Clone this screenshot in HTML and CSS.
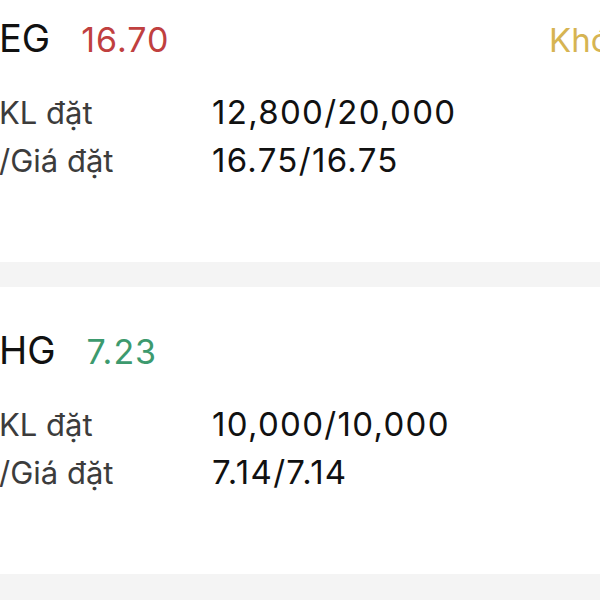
FILE: index.html
```html
<!DOCTYPE html>
<html lang="vi">
<head>
    <meta charset="UTF-8">
    <meta name="viewport" content="width=device-width, initial-scale=1.0">
    <title>Lệnh đặt</title>
    <link rel="stylesheet" href="styles.css">
</head>
<body>
    <div class="orders">
        <div class="order">
            <div class="order-head">
                <span class="ticker">EG</span>
                <span class="price down">16.70</span>
                <span class="status">Khớp</span>
            </div>
            <div class="row">
                <span class="label">KL đặt</span>
                <span class="value">12,800/20,000</span>
            </div>
            <div class="row">
                <span class="label">/Giá đặt</span>
                <span class="value">16.75/16.75</span>
            </div>
        </div>
        <div class="order">
            <div class="order-head">
                <span class="ticker">HG</span>
                <span class="price up">7.23</span>
            </div>
            <div class="row">
                <span class="label">KL đặt</span>
                <span class="value">10,000/10,000</span>
            </div>
            <div class="row">
                <span class="label">/Giá đặt</span>
                <span class="value">7.14/7.14</span>
            </div>
        </div>
    </div>
</body>
</html>
```

FILE: styles.css
```css
body {
    margin: 0;
    font-family: Inter, "Noto Sans", sans-serif;
    color: #111;
    background-color: #f4f4f4;
    overflow: hidden;
}
.orders {
    margin-top: -25px;
    margin-left: -1px;
    width: 650px;
}
.order {
    background-color: #fff;
    height: 287px;
    box-sizing: border-box;
    padding-top: 40px;
    margin-bottom: 25px;
}
.order-head {
    display: flex;
    align-items: baseline;
    gap: 31px;
    height: 50px;
    margin-bottom: 27px;
}
.ticker {
    font-size: 38px;
}
.price {
    font-size: 34px;
    letter-spacing: 1px;
}
.down {
    color: #c0403f;
}
.up {
    color: #3d9a6e;
}
.status {
    margin-left: auto;
    width: 100px;
    font-size: 33px;
    color: #d6b452;
}
.row {
    display: flex;
    align-items: baseline;
    height: 48px;
}
.label {
    width: 213px;
    font-size: 31px;
    color: #3c3c3c;
}
.value {
    font-size: 33px;
    letter-spacing: 1.3px;
}
```
